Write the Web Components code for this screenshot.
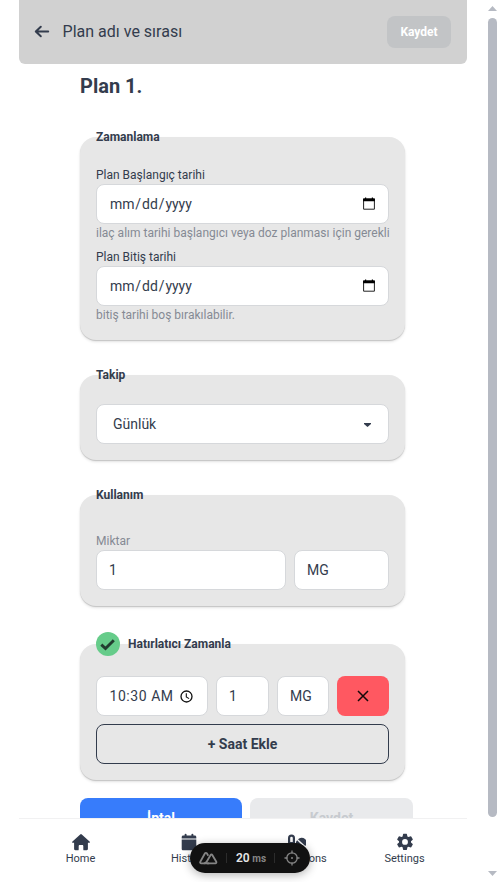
<!DOCTYPE html>
<html lang="tr">
<head>
<meta charset="utf-8">
<title>Plan adı ve sırası</title>
<style>
html,body{margin:0;height:100%;overflow:hidden;background:#fff}
body{font-family:Roboto,"Noto Sans",sans-serif;color:#333c4d;font-size:14px;line-height:20px}
</style>
</head>
<body>
<plan-app></plan-app>
<script>
function define(name, html){
  const t=document.createElement('template');
  t.innerHTML=html;
  customElements.define(name,class extends HTMLElement{
    constructor(){super();this.attachShadow({mode:'open'}).append(t.content.cloneNode(true));}
  });
}

define('app-header',`<style>
:host{display:flex;box-sizing:border-box;width:448px;height:64px;margin-left:19px;padding:0 16px 0 14px;align-items:center;background:#d1d1d1;border-radius:0 0 6px 6px;flex:none}
svg{display:block;margin-right:11.600px}
span{flex:1;font-size:16px;line-height:24px}
b{width:64px;height:32px;line-height:32px;border-radius:8px;background:#c2c4c6;color:#fff;text-align:center;font-size:12px}
</style>
<svg width="18" height="18" viewBox="0 0 18 18" fill="none" stroke="#333c4d" stroke-width="2" stroke-linecap="round" stroke-linejoin="round"><path d="M15.200 8.500H3M7.800 3.700 2.800 8.500l5 4.800"/></svg>
<span>Plan adı ve sırası</span><b>Kaydet</b>`);

define('plan-card',`<style>
:host{display:flex;flex-direction:column;box-sizing:border-box;width:325px;padding:0 16px 16px;border-radius:16px;background:#e7e7e7;box-shadow:0 1px 1px rgba(0,0,0,.16),0 2px 3px rgba(0,0,0,.1)}
.legend{height:16px;margin-top:-8px;display:flex;align-items:center;gap:8px;font-size:12px;line-height:16px;font-weight:700}
</style><div class="legend"><slot name="legend"></slot></div><slot></slot>`);

define('text-field',`<style>
:host{display:flex;box-sizing:border-box;align-items:center;justify-content:space-between;height:40px;padding:0 12px;border:1px solid #d6d8db;border-radius:8px;background:#fff;font-size:14px;line-height:20px;white-space:nowrap}
</style><slot></slot><slot name="icon"></slot>`);

define('date-text',`<style>:host{display:block}span{padding:0 .9px}</style><span>mm</span>/<span>dd</span>/<span>yyyy</span>`);
define('calendar-icon',`<style>:host{display:block;margin:-1px 1px 0 0}svg{display:block}</style>
<svg width="12" height="13" viewBox="0 0 12 13"><path d="M.6 2h10.800v10.200H.6z" fill="none" stroke="#222" stroke-width="1"/><path d="M.1 1.500H2V.5h1.200v1h5.600v-1H10v1h1.900v2.800H.1z"/></svg>`);
define('clock-icon',`<style>:host{display:block;margin-right:2.500px}svg{display:block}</style>
<svg width="13" height="13" viewBox="0 0 13 13" fill="none" stroke="#111"><circle cx="6.500" cy="6.500" r="5.500" stroke-width="1.300"/><path d="M6.300 3.200v3.700l2.800 1.700" stroke-width="1.100"/></svg>`);
define('check-mark',`<style>:host{display:block;flex:none;width:24px;height:24px}svg{display:block}</style>
<svg width="24" height="24"><circle cx="12" cy="12" r="12" fill="#66cc8a"/><path d="m5.300 12.600 4.200 3.900 8.300-8.300" fill="none" stroke="#223d30" stroke-width="2.900"/></svg>`);
define('field-note',`<style>:host{display:block;height:16px;font-size:12px;line-height:16px;white-space:nowrap}:host([muted]){color:#858a94}</style><slot></slot>`);

define('nav-item',`<style>
:host{display:flex;flex-direction:column;align-items:center;width:108px;padding-top:14px;font-size:11px;line-height:14px}
::slotted(svg){display:block;height:18px;margin-bottom:1px}
</style><slot name="icon"></slot><slot></slot>`);

define('bottom-nav',`<style>
:host{display:flex;box-sizing:border-box;width:448px;height:64px;margin-left:19px;padding:0 8.500px 0 7.500px;border-top:1px solid #f1f1f2;background:#fff;flex:none}
svg{fill:#333c4d}
</style>
<nav-item><svg slot="icon" width="18" height="18" viewBox="0 0 18 18"><path d="M8.200 1.400a1.200 1.200 0 0 1 1.600 0l8 7.300c.4.500.2 1-.4 1h-1.500v6.400c0 .7-.5 1.200-1.200 1.200h-2.600c-.5 0-.8-.4-.8-.9v-3.100c0-.8-.4-1.200-1.100-1.200H7.800c-.7 0-1.100.4-1.100 1.200v3.100c0 .5-.3.900-.8.900H3.300c-.7 0-1.200-.5-1.200-1.200V9.700H.6c-.6 0-.8-.5-.4-1z"/></svg>Home</nav-item>
<nav-item><svg slot="icon" width="16" height="18" viewBox="0 0 16 18"><path d="M.7 5.500V4.200c0-1 .6-1.600 1.600-1.600h1.300V1.700a1 1 0 0 1 2 0v.9h4.800v-.9a1 1 0 0 1 2 0v.9h1.300c1 0 1.600.6 1.600 1.600v1.300zM.7 6.600h14.600v9.100c0 1-.6 1.600-1.600 1.600H2.300c-1 0-1.600-.6-1.600-1.600z"/></svg>History</nav-item>
<nav-item><svg slot="icon" width="18" height="18" viewBox="0 0 18 18"><path d="M0 5a3.500 3.500 0 0 1 7 0v8a3.500 3.500 0 0 1-7 0zM2.200 5v4h2.600V5a1.300 1.300 0 0 0-2.600 0z" fill-rule="evenodd"/><path d="M10 6.300a4.900 4.900 0 0 1 7.300 6.700zM9.100 7.300l7 6.800a4.900 4.900 0 0 1-7-6.800z"/></svg>Medications</nav-item>
<nav-item><svg slot="icon" width="18" height="18" viewBox="0 0 24 24"><path fill-rule="evenodd" d="m9.400 1.500.5-.5h4.200l.5.500.6 3 1.500.9 2.900-1 .7.200 2.100 3.600-.1.700-2.300 2v1.800l2.300 2 .1.700-2.100 3.600-.7.200-2.900-1-1.500.9-.6 3-.5.500H9.900l-.5-.5-.6-3-1.500-.9-2.900 1-.7-.2-2.100-3.600.1-.7 2.300-2v-1.800l-2.300-2-.1-.7 2.100-3.600.7-.2 2.900 1 1.500-.9zM12 8a3.900 3.900 0 1 0 0 7.800A3.900 3.900 0 0 0 12 8z"/></svg>Settings</nav-item>`);

define('dev-pill',`<style>
:host{position:absolute;left:190px;top:843px;width:120px;height:30px;box-sizing:border-box;display:flex;align-items:center;padding:0 9px;border-radius:15px;background:#111;color:#e5e5e5;box-shadow:0 2px 10px rgba(0,0,0,.3);font-size:12px;line-height:16px}
svg{display:block;fill:none;stroke:#858585;flex:none}
i{width:1px;height:10px;background:#2c2c2c;flex:none}
b{font-weight:600}small{font-size:10px;font-weight:700;color:#858585;margin:1px 0 0 2.500px}
</style>
<svg width="20" height="14" viewBox="0 0 20 14" stroke-width="1.800" stroke-linejoin="round"><path d="M10.200 12.300H2.200c-.9 0-1.400-.8-.9-1.600L6 2.300c.4-.7 1.400-.7 1.800 0l1.500 2.500"/><path d="M4.800 12.300c1.700 0 2.500-.9 3.300-2.300l3.500-6c.4-.7 1.300-.7 1.700 0l4 6.800c.4.700-.1 1.500-.9 1.500H8"/></svg>
<i style="margin:0 9px 0 7px"></i><b>20</b><small>ms</small><i style="margin:0 9px 0 8px"></i>
<svg width="16" height="16" viewBox="0 0 16 16" stroke-width="1.300"><circle cx="8" cy="8" r="5.200"/><path d="M8 .5v3M8 12.500v3M.5 8h3M12.500 8h3"/><circle cx="8" cy="8" r="1" fill="#858585" stroke="none"/></svg>`);

define('scroll-rail',`<style>
:host{display:flex;box-sizing:border-box;width:12px;margin-right:1px;padding:6px 1px 6px 0;flex-direction:column;align-items:center;height:882px}
div{width:9px;height:799px;margin-top:7px;border-radius:5px;background:#b6bac3}
svg{display:block;fill:#b6bac3}
svg:last-child{margin-top:auto}
</style><svg width="9" height="5"><path d="m0 5 4.500-5L9 5z"/></svg><div></div><svg width="9" height="5"><path d="m0 0 4.500 5L9 0z"/></svg>`);

define('plan-app',`<style>
:host{display:flex;width:500px;height:882px;justify-content:space-between}
.page{display:flex;flex-direction:column;width:484px}
main{height:754px;overflow:hidden;padding-left:80px;box-sizing:border-box}
h1{margin:8px 0 0;height:28px;font-size:20px;line-height:28px;font-weight:700}
.row{display:flex;gap:8px}
.delete{display:flex;width:52px;height:40px;border-radius:8px;background:#ff5861;align-items:center;justify-content:center}
.add{margin-top:8px;height:40px;box-sizing:border-box;border:1px solid #333c4d;border-radius:8px;text-align:center;line-height:38px;font-weight:700}
.actions{margin-top:18px;width:333px;font-weight:700;text-align:center;line-height:40px}
.actions div{width:162px;height:40px;border-radius:8px;background:#377cfb;color:#fff}
.actions .off{width:163px;background:#e9eaec;color:#c7cacf}
</style>
<div class="page">
<app-header></app-header>
<main>
<h1>Plan 1.</h1>
<plan-card style="margin-top:37px">
 <span slot="legend">Zamanlama</span>
 <field-note style="margin-top:22px">Plan Başlangıç tarihi</field-note>
 <text-field style="margin-top:1px"><date-text></date-text><calendar-icon slot="icon"></calendar-icon></text-field>
 <field-note muted style="margin-top:1px">ilaç alım tarihi başlangıcı veya doz planması için gerekli</field-note>
 <field-note style="margin-top:8px">Plan Bitiş tarihi</field-note>
 <text-field style="margin-top:1px"><date-text></date-text><calendar-icon slot="icon"></calendar-icon></text-field>
 <field-note muted style="margin-top:1px;padding-bottom:1px">bitiş tarihi boş bırakılabilir.</field-note>
</plan-card>
<plan-card style="margin-top:35px">
 <span slot="legend">Takip</span>
 <text-field style="margin-top:21px;padding:0 17px 0 16px">Günlük<svg slot="icon" width="7" height="4" style="margin-top:1px"><path d="M0 0h7v1L3.500 4 0 1z" fill="#333c4d"/></svg></text-field>
</plan-card>
<plan-card style="margin-top:35px">
 <span slot="legend">Kullanım</span>
 <field-note muted style="margin-top:30px">Miktar</field-note>
 <div class="row" style="margin-top:1px"><text-field style="width:190px">1</text-field><text-field style="width:95px">MG</text-field></div>
</plan-card>
<plan-card style="margin-top:38px">
 <check-mark slot="legend"></check-mark><span slot="legend">Hatırlatıcı Zamanla</span>
 <div class="row" style="margin-top:24px">
  <text-field style="width:112px"><span style="padding-left:.5px;letter-spacing:.55px">10:30 AM</span><clock-icon slot="icon"></clock-icon></text-field>
  <text-field style="width:53px">1</text-field><text-field style="width:52px">MG</text-field>
  <div class="delete"><svg width="12" height="12" viewBox="0 0 12 12" stroke="#16080a" stroke-width="1.500"><path d="m1 1 10 10M11 1 1 11"/></svg></div>
 </div>
 <div class="add">+ Saat Ekle</div>
</plan-card>
<div class="row actions"><div>İptal</div><div class="off">Kaydet</div></div>
</main>
<bottom-nav></bottom-nav>
</div>
<scroll-rail></scroll-rail>
<dev-pill></dev-pill>`);
</script>
</body>
</html>
